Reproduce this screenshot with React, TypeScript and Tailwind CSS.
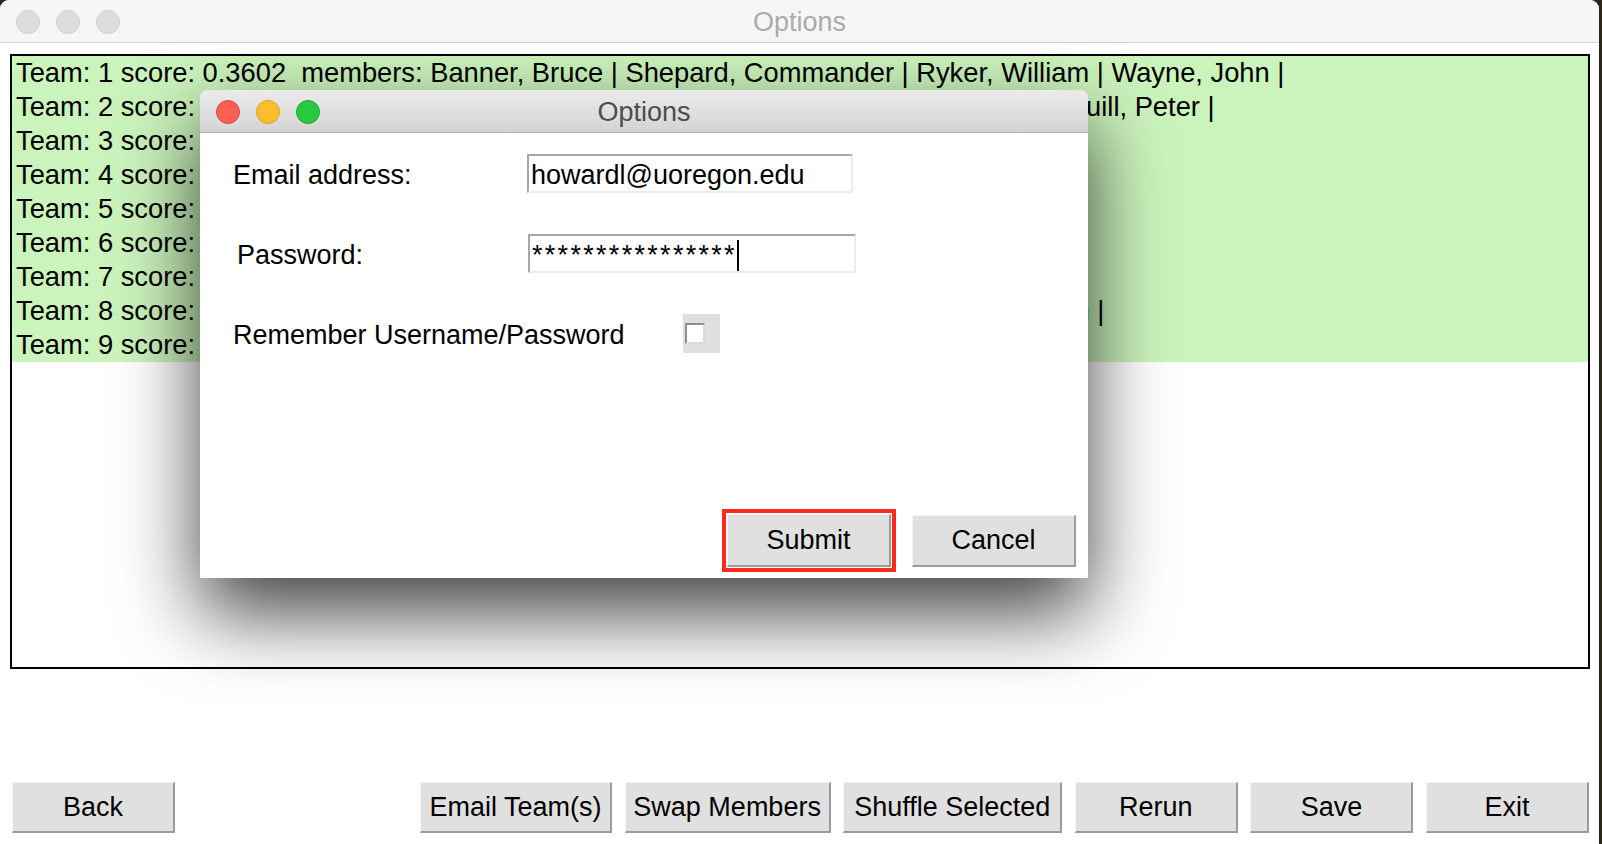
import React from "react";

const teams = [
  "Team: 1 score: 0.3602  members: Banner, Bruce | Shepard, Commander | Ryker, William | Wayne, John |",
  "Team: 2 score: 0.3571  members: Rogers, Buck | Skywalker, Luke | Kenobi, Obi-Wan | Quill, Peter |",
  "Team: 3 score: 0.3544  members: Kent, Clark | Solo, Han | Grey, Jean | Prince, Diana |",
  "Team: 4 score: 0.3498  members: Allen, Barry | Organa, Leia | Data, Lt. | Logan, James |",
  "Team: 5 score: 0.3472  members: Stark, Tony | Spock, Mr. | Queen, Oliver | Storm, Sue |",
  "Team: 6 score: 0.3415  members: Parker, Peter | Riker, Will | Jordan, Hal | Fury, Nick |",
  "Team: 7 score: 0.3389  members: Strange, Stephen | Uhura, Nyota | Romanoff, Nat |",
  "Team: 8 score: 0.3302  members: Murdock, Matt | Lang, Scott | Picard, Jean | Stark, Tom |",
  "Team: 9 score: 0.3247  members: Barton, Clint | Troi, Deanna | Vader, Darth |",
];

function Lights({ active }: { active: boolean }) {
  const dots = active
    ? [
        "bg-[#fd5f57] border-[#e0443e]",
        "bg-[#febc2e] border-[#dea123]",
        "bg-[#28c840] border-[#1aab29]",
      ]
    : [
        "bg-[#dddddd] border-[#d0d0d0]",
        "bg-[#dddddd] border-[#d0d0d0]",
        "bg-[#dddddd] border-[#d0d0d0]",
      ];
  return (
    <div className="mt-[2px] flex items-center gap-[16px] pl-[16px]">
      {dots.map((c, i) => (
        <span key={i} className={`block h-[24px] w-[24px] rounded-full border ${c}`} />
      ))}
    </div>
  );
}

function TkButton({ label, className = "" }: { label: string; className?: string }) {
  return (
    <div
      className={`flex items-center justify-center border-t border-l border-t-[#f4f4f4] border-l-[#f4f4f4] border-r-2 border-b-2 border-r-[#9b9b9b] border-b-[#9b9b9b] bg-[#e0e0e0] text-[27px] ${className}`}
    >
      {label}
    </div>
  );
}

function Field({ children, className = "" }: { children: React.ReactNode; className?: string }) {
  return (
    <div
      className={`flex h-[39px] items-center border-2 border-t-[#a8a8a8] border-l-[#a8a8a8] border-r-[#ececec] border-b-[#ececec] bg-white pl-[2px] pt-[3px] ${className}`}
    >
      {children}
    </div>
  );
}

export default function App() {
  return (
    <div className="h-[844px] w-[1602px] overflow-hidden bg-[#2a2419] font-['Liberation_Sans',Arial,sans-serif] text-black">
      <div className="relative h-[844px] w-[1599px] overflow-hidden rounded-t-[9px] bg-white">
        {/* window title bar */}
        <div className="grid h-[43px] grid-cols-[1fr_auto_1fr] items-center border-b border-[#d3d3d3] bg-[#f6f6f6]">
          <Lights active={false} />
          <div className="pt-[2px] text-[27px] text-[#ababab]">Options</div>
          <div />
        </div>

        {/* teams list */}
        <div className="ml-[10px] mt-[11px] h-[615px] w-[1580px] border-2 border-black">
          <div className="bg-[#cbf3bc]">
            {teams.map((t) => (
              <div key={t} className="h-[34px] whitespace-pre pl-[4px] text-[27.3px] leading-[34px]">
                {t}
              </div>
            ))}
          </div>
        </div>

        {/* bottom buttons */}
        <div className="mt-[113px] flex h-[51px] pl-[12px] pr-[10px]">
          <TkButton label="Back" className="w-[163px]" />
          <div className="ml-auto flex gap-[12.6px]">
            <TkButton label="Email Team(s)" className="w-[192px]" />
            <TkButton label="Swap Members" className="w-[206px]" />
            <TkButton label="Shuffle Selected" className="w-[219px]" />
            <TkButton label="Rerun" className="w-[163px]" />
            <TkButton label="Save" className="w-[163px]" />
            <TkButton label="Exit" className="w-[163px]" />
          </div>
        </div>

        {/* options dialog */}
        <div className="absolute left-[200px] top-[90px] h-[488px] w-[888px] overflow-hidden rounded-t-[8px] bg-white shadow-[0_35px_80px_rgba(0,0,0,0.75)]">
          <div className="grid h-[43px] grid-cols-[1fr_auto_1fr] items-center border-b border-[#b2b2b2] bg-gradient-to-b from-[#ebebeb] to-[#d4d4d4]">
            <Lights active />
            <div className="pt-[2px] text-[27px] text-[#4d4d4d]">Options</div>
            <div />
          </div>

          <div className="pl-[33px] pt-[21px] text-[27px] leading-[39px]">
            <div className="flex h-[39px] items-center">
              <div className="w-[294px] pt-[4px]">Email address:</div>
              <Field className="w-[326px]">howardl@uoregon.edu</Field>
            </div>

            <div className="mt-[41px] flex h-[39px] items-center">
              <div className="w-[295px] pl-[4px] pt-[4px]">Password:</div>
              <Field className="w-[328px]">
                <span className="tracking-[2.3px]">****************</span>
                <span className="block h-[31px] w-[2px] bg-black" />
              </Field>
            </div>

            <div className="mt-[41px] flex h-[39px] items-center">
              <div className="w-[450px] pt-[4px]">Remember Username/Password</div>
              <div className="flex h-[39px] w-[37px] items-center bg-[#dfdfdf] pl-[2px]">
                <span className="block h-[21px] w-[20px] border-2 border-t-[#8d8d8d] border-l-[#8d8d8d] border-r-[#dadada] border-b-[#dadada] bg-white" />
              </div>
            </div>

            <div className="ml-[489px] mt-[156px] flex items-center gap-[16px]">
              <div className="border-[4px] border-[#fb2a1c] bg-white p-[1px]">
                <TkButton label="Submit" className="h-[53px] w-[164px]" />
              </div>
              <TkButton label="Cancel" className="h-[52px] w-[164px]" />
            </div>
          </div>
        </div>
      </div>
    </div>
  );
}
